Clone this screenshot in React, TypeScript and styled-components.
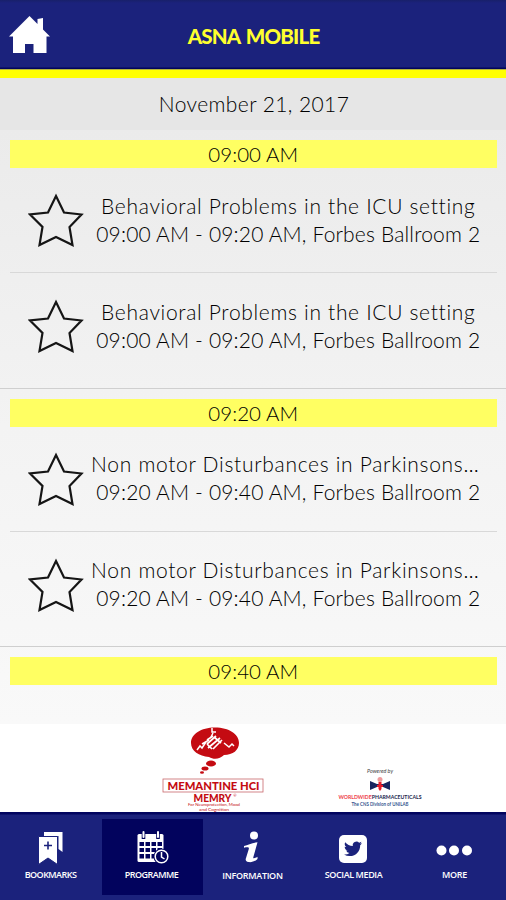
import React from "react";
import styled, { createGlobalStyle } from "styled-components";

const GlobalStyle = createGlobalStyle`
  * { box-sizing: border-box; }
  html, body { margin: 0; padding: 0; }
  body { font-family: "Lato", "Open Sans", sans-serif; }
`;

const Screen = styled.div`
  display: flex;
  flex-direction: column;
  width: 506px;
  height: 900px;
  overflow: hidden;
  background: #fff;
`;

const Header = styled.header`
  display: grid;
  grid-template-columns: 58px 1fr 58px;
  align-items: center;
  flex: none;
  height: 78px;
  padding-bottom: 4px;
  background: linear-gradient(#18206a 0, #1b227c 3px, #1b227c 67px, #02055c 68px, #02055c 69px, #b6b53c 69px, #b6b53c 70px, #ffff02 70px);
`;

const HomeIcon = styled.svg`
  width: 42px;
  height: 40px;
  margin: 0 0 4px 9px;
  fill: #fff;
`;

const Title = styled.h1`
  margin: 0;
  padding: 0 0 3px 1px;
  color: #ffff2e;
  font-size: 20.5px;
  font-weight: 900;
  line-height: 26px;
  letter-spacing: -0.8px;
  word-spacing: 2px;
  text-align: center;
`;

const DateBar = styled.div`
  flex: none;
  height: 52px;
  padding: 13px 0 0 2px;
  background: #e6e6e6;
  color: #000;
  font-size: 21px;
  font-weight: 300;
  line-height: 26px;
  letter-spacing: 0.4px;
  text-align: center;
`;

const Agenda = styled.main`
  flex: none;
  height: 594px;
  overflow: hidden;
  background: linear-gradient(#ebebeb, #f3f3f3 50%, #f9f9f9);
`;

const Slot = styled.section`
  height: 258.600px;
  padding: 10px 9.500px 0 10px;
  border-bottom: 1px solid #cfcfcf;
`;

const SlotTime = styled.h2`
  height: 28px;
  margin: 0;
  background: #ffff62;
  color: #000;
  font-size: 20.5px;
  font-weight: 300;
  line-height: 28px;
  letter-spacing: 0.05px;
  text-align: center;
`;

const Session = styled.article`
  display: flex;
  height: 104px;
  padding: 24px 14px 0 18px;
  & + & { border-top: 1px solid #d8d8d8; padding-top: 25px; height: 106px; }
`;

const Star = styled.svg`
  flex: none;
  width: 56px;
  height: 56px;
  fill: none;
  stroke: #151515;
  stroke-width: 2.2;
`;

const Details = styled.div`
  flex: 1;
  display: flex;
  flex-direction: column;
  align-items: center;
  width: 0;
  margin: -0.5px -10px 0 0;
`;

const Line = styled.span<{ $spacing: number; $shift?: number }>`
  height: 28px;
  margin-left: ${(p) => p.$shift ?? 0}px;
  color: #000;
  font-size: 21px;
  font-weight: 300;
  line-height: 28px;
  letter-spacing: ${(p) => p.$spacing}px;
  white-space: nowrap;
`;

const Sponsors = styled.aside`
  display: flex;
  flex: none;
  height: 88px;
  background: #fff;
`;

const MemryLogo = styled.svg`
  width: 104px;
  height: 88px;
  margin-left: 161px;
`;

const PharmaLogo = styled.svg`
  width: 90px;
  height: 88px;
  margin-left: 70px;
`;

const TabBar = styled.nav`
  display: grid;
  grid-template-columns: repeat(5, 1fr);
  flex: none;
  height: 88px;
  padding: 7px 0 5px 1px;
  background: linear-gradient(#02055f 0, #02055f 2px, #1b227c 3px);
`;

const Tab = styled.div<{ $active?: boolean }>`
  display: flex;
  flex-direction: column;
  align-items: center;
  padding: 10px 2px 0 0;
  background: ${(p) => (p.$active ? "#02035d" : "transparent")};
`;

const TabIcon = styled.svg`
  width: 40px;
  height: 38px;
  overflow: visible;
`;

const TabLabel = styled.span<{ $drop?: number; $spacing?: number }>`
  margin-top: ${(p) => 2 + (p.$drop ?? 0)}px;
  color: #fff;
  font-family: "Open Sans", sans-serif;
  font-size: 9px;
  font-weight: 600;
  line-height: 12px;
  letter-spacing: ${(p) => p.$spacing ?? -0.3}px;
`;

type Talk = { title: string; titleSpacing: number; titleShift: number; place: string };

const talks: Record<string, Talk> = {
  icu: {
    title: "Behavioral Problems in the ICU setting",
    titleSpacing: 0.68,
    titleShift: 0,
    place: "09:00 AM - 09:20 AM, Forbes Ballroom 2",
  },
  motor: {
    title: "Non motor Disturbances in Parkinsons…",
    titleSpacing: 0.7,
    titleShift: -6,
    place: "09:20 AM - 09:40 AM, Forbes Ballroom 2",
  },
};

const slots = [
  { time: "09:00 AM", talks: [talks.icu, talks.icu] },
  { time: "09:20 AM", talks: [talks.motor, talks.motor] },
  { time: "09:40 AM", talks: [] },
];

function BookmarksIcon() {
  return (
    <TabIcon viewBox="0 0 40 38">
      <path fill="#fff" d="M13 3h18.500v20l-4-3V7H13z" />
      <path fill="#fff" stroke="#1b227c" strokeWidth="1" d="M7.500 7.500h19v28L17 29l-9.500 6.500z" />
      <path stroke="#1b227c" strokeWidth="1.600" d="M17 12.500v8M13 16.500h8" />
    </TabIcon>
  );
}

function ProgrammeIcon() {
  return (
    <TabIcon viewBox="0 0 40 38">
      <rect x="5.500" y="5" width="26" height="28" rx="1.500" fill="#fff" />
      <path stroke="#02035d" strokeWidth="3.600" d="M11.500 2v8M26 2v8" />
      <path stroke="#fff" strokeWidth="2" strokeLinecap="round" d="M11.500 3v5M26 3v5" />
      <path
        fill="#02035d"
        d="M7.500 13h4.500v4H7.500zm6 0h4.500v4h-4.500zm6 0h4.500v4h-4.500zm6 0h4.500v4h-4.500zM7.500 19h4.500v4H7.500zm6 0h4.500v4h-4.500zm6 0h4.500v4h-4.500zm6 0h4.500v4h-4.500zM7.500 25h4.500v4.500H7.500zm6 0h4.500v4.500h-4.500zm6 0h4.500v4.500h-4.500z"
      />
      <circle cx="29.500" cy="27.500" r="8" fill="#02035d" />
      <circle cx="29.500" cy="27.500" r="6.300" fill="#02035d" stroke="#fff" strokeWidth="1.500" />
      <path d="M29.500 23v5l3 2" fill="none" stroke="#fff" strokeWidth="1.500" />
    </TabIcon>
  );
}

function InformationIcon() {
  return (
    <TabIcon viewBox="0 0 40 38">
      <circle cx="21" cy="6.500" r="4" fill="#fff" />
      <path
        fill="#fff"
        d="M11 17c4-1 8-3.500 13.500-3.700l-4.200 15c-.3 1.500 1 1.200 4.200-.6v2.200c-3 2.700-6 3.700-9 3.200-3-.5-3.200-2.200-2.500-4.200l2.800-9c.4-1.500-.6-2-4.800-1.200z"
      />
    </TabIcon>
  );
}

function TwitterIcon() {
  return (
    <TabIcon viewBox="0 0 40 38">
      <rect x="5" y="6" width="28" height="28" rx="5" fill="#fff" />
      <path
        fill="#1b227c"
        transform="translate(10 10.800) scale(.75)"
        d="M23.950 4.570a10 10 0 0 1-2.820.77 4.960 4.960 0 0 0 2.160-2.720c-.95.550-2 .95-3.130 1.180a4.920 4.920 0 0 0-8.380 4.480C7.690 8.090 4.070 6.130 1.640 3.160a4.820 4.820 0 0 0-.67 2.480c0 1.710.87 3.210 2.190 4.100a4.900 4.900 0 0 1-2.230-.62v.06a4.920 4.920 0 0 0 3.950 4.830 5 5 0 0 1-2.210.08 4.940 4.940 0 0 0 4.600 3.420A9.870 9.870 0 0 1 0 19.540a13.990 13.990 0 0 0 7.550 2.210c9.050 0 14-7.500 14-13.980 0-.21 0-.42-.02-.63a9.940 9.940 0 0 0 2.420-2.570z"
      />
    </TabIcon>
  );
}

function MoreIcon() {
  return (
    <TabIcon viewBox="0 0 40 38" fill="#fff">
      <circle cx="6.500" cy="21.500" r="5" />
      <circle cx="19" cy="21.500" r="5" />
      <circle cx="32" cy="21.500" r="5" />
    </TabIcon>
  );
}

function MemryBrand() {
  return (
    <MemryLogo viewBox="0 0 104 88">
      <g fill="#c40b12">
        <path d="M30 19c0-9 10-15.500 24-15.500S78 10 78 19c0 7-6 12-15 12-4 4-10 5-15 2-10-1-18-6-18-14z" />
        <ellipse cx="50" cy="39.500" rx="5" ry="3" />
        <ellipse cx="44" cy="44.500" rx="3.500" ry="2" />
        <ellipse cx="41" cy="48.500" rx="2" ry="1.200" />
      </g>
      <g fill="none" stroke="#fff">
        <path strokeWidth="1.500" d="M51 4v4h4M52 9l-2 4M36 26l3-4 2 2 4-6M63 19l5 4 3-3 2 2M41 20l7-4" />
        <path strokeWidth="1.700" d="m46 20 9-8M47 24l12-10M52 25l9-9M46 16l6-4M46 20l5 5M53 13l7 6" />
      </g>
      <rect x="2" y="55" width="100" height="13" fill="#fff" stroke="#c9686b" strokeWidth="0.800" />
      <g fill="#c40b12" fontFamily="Lato, sans-serif" textAnchor="middle">
        <text x="52.500" y="65.500" fontSize="10.500" fontWeight="900" textLength="92" lengthAdjust="spacingAndGlyphs">MEMANTINE HCI</text>
        <text x="51.500" y="77.500" fontSize="10.500" fontWeight="900" textLength="38" lengthAdjust="spacingAndGlyphs">MEMRY</text>
        <text x="74" y="73" fontSize="4">®</text>
        <text x="53" y="82.300" fontSize="4" textLength="52" lengthAdjust="spacingAndGlyphs">For Neuroprotection, Mood</text>
        <text x="53" y="87" fontSize="4" textLength="30" lengthAdjust="spacingAndGlyphs">and Cognition</text>
      </g>
    </MemryLogo>
  );
}

function PharmaBrand() {
  return (
    <PharmaLogo viewBox="0 0 90 88">
      <g textAnchor="middle" fontFamily="Lato, sans-serif">
        <text x="45" y="48.500" fontSize="6" fontStyle="italic" fill="#444" textLength="26" lengthAdjust="spacingAndGlyphs">Powered by</text>
        <path fill="#17245f" d="M35 57l7 3h6l7-3v9l-7-3h-6l-7 3z" />
        <circle cx="45" cy="55.500" r="2.500" fill="#ef9b9d" />
        <path fill="#e51b2b" d="M43.500 58h3v3h1.500v2h-1.500v2L45 67l-1.500-2v-2H42v-2h1.500z" />
        <text x="45" y="74.800" fontSize="6" fontWeight="700" fill="#22264e" textLength="83" lengthAdjust="spacingAndGlyphs">
          <tspan fill="#ee3e49">WORLDWIDE</tspan>PHARMACEUTICALS
        </text>
        <text x="45" y="81.800" fontSize="5" fontWeight="700" fill="#35558f" textLength="57" lengthAdjust="spacingAndGlyphs">The CNS Division of UNILAB</text>
      </g>
    </PharmaLogo>
  );
}

export default function App() {
  return (
    <>
      <GlobalStyle />
      <Screen>
        <Header>
          <HomeIcon viewBox="0 0 42 40">
            <path d="M0 21.500 20.500 1l8 8V4l5.500-1v11.500l7 7h-3.500V38h-13v-9h-8.500v9H4V21.500z" />
          </HomeIcon>
          <Title>ASNA MOBILE</Title>
        </Header>
        <DateBar>November 21, 2017</DateBar>
        <Agenda>
          {slots.map((slot) => (
            <Slot key={slot.time}>
              <SlotTime>{slot.time}</SlotTime>
              {slot.talks.map((talk, i) => (
                <Session key={i}>
                  <Star viewBox="0 0 56 56">
                    <path d="M28 4l8 16.500L53.500 22.500 41.500 35l3 18L28 45 11.500 53l3-18L2 22.500 20 20.500z" />
                  </Star>
                  <Details>
                    <Line $spacing={talk.titleSpacing} $shift={talk.titleShift}>{talk.title}</Line>
                    <Line $spacing={0.17}>{talk.place}</Line>
                  </Details>
                </Session>
              ))}
            </Slot>
          ))}
        </Agenda>
        <Sponsors>
          <MemryBrand />
          <PharmaBrand />
        </Sponsors>
        <TabBar>
          <Tab>
            <BookmarksIcon />
            <TabLabel $spacing={-0.55}>BOOKMARKS</TabLabel>
          </Tab>
          <Tab $active>
            <ProgrammeIcon />
            <TabLabel $spacing={-0.5}>PROGRAMME</TabLabel>
          </Tab>
          <Tab>
            <InformationIcon />
            <TabLabel $drop={1}>INFORMATION</TabLabel>
          </Tab>
          <Tab>
            <TwitterIcon />
            <TabLabel $spacing={-0.4}>SOCIAL MEDIA</TabLabel>
          </Tab>
          <Tab>
            <MoreIcon />
            <TabLabel>MORE</TabLabel>
          </Tab>
        </TabBar>
      </Screen>
    </>
  );
}
